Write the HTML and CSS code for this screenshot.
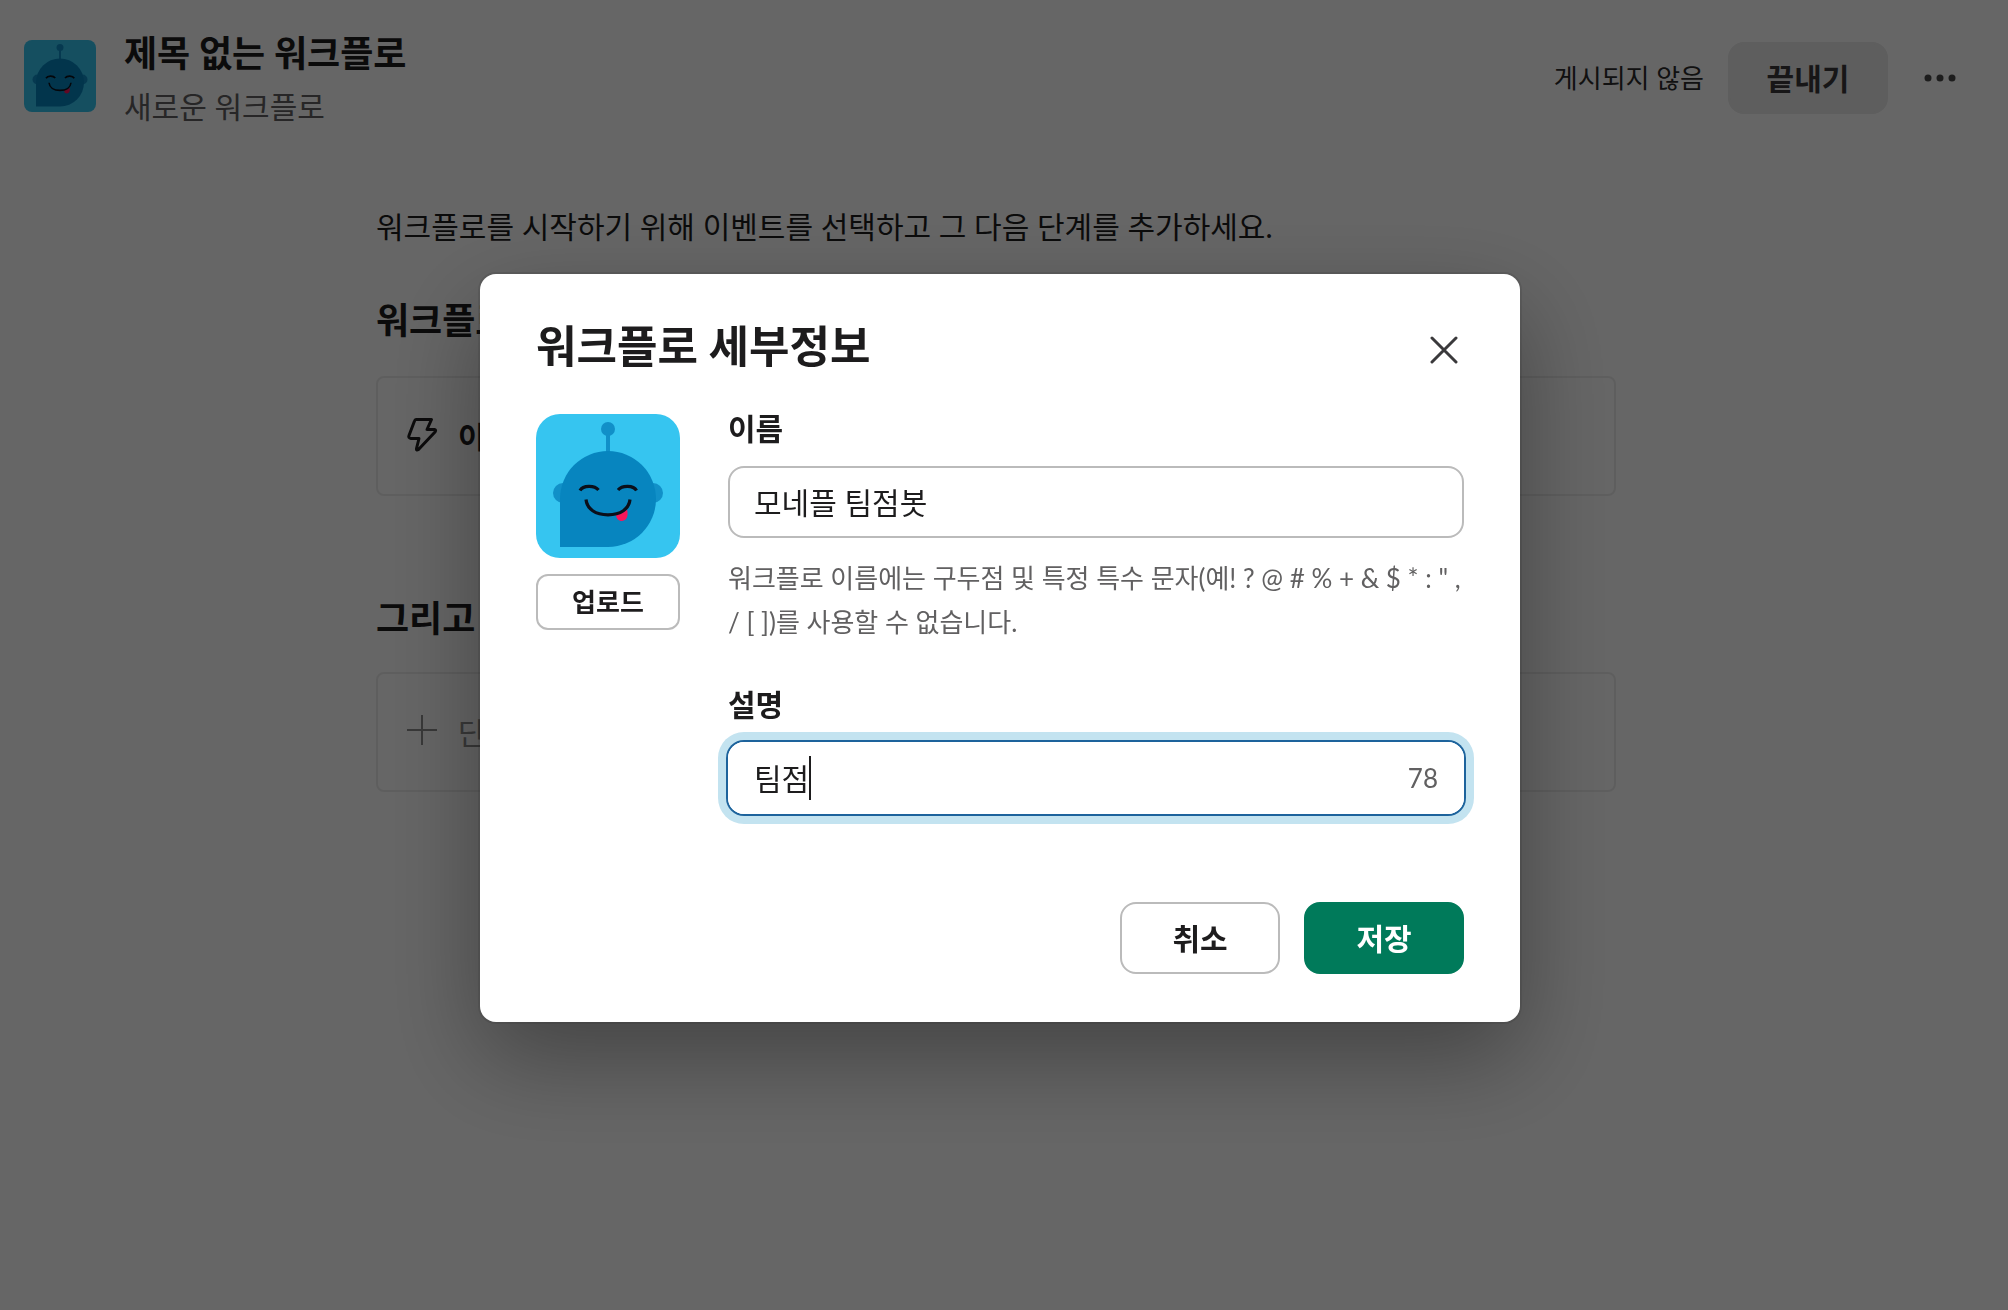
FILE: index.html
```html
<!DOCTYPE html>
<html lang="ko">
<head>
<meta charset="utf-8">
<meta name="viewport" content="width=device-width, initial-scale=1">
<title>워크플로 세부정보</title>
<link rel="stylesheet" href="styles.css">
</head>
<body>
<svg class="sprite" aria-hidden="true">
  <symbol id="bot" viewBox="0 0 144 144">
    <rect width="144" height="144" fill="#36c5f0"/>
    <g fill="#1190c8">
      <circle cx="72" cy="15" r="7"/>
      <rect x="70" y="18" width="4" height="22"/>
      <circle cx="27" cy="79" r="10"/>
      <circle cx="117" cy="79" r="10"/>
    </g>
    <path d="M24 85a48 48 0 1 1 48 48H24z" fill="#0785bf"/>
    <path d="M80 100.500c4-.5 8-2 11-5 1.500 5 .5 11-5 11.500-3.500 0-6-2.500-6-6.500z" fill="#f8155a"/>
    <g fill="none" stroke="#0b0f1a" stroke-width="3.200">
      <path d="M44 76.500c3-5.500 14.500-5.500 18.500-.5M82 76c4-5 15.500-5 18.500 .5"/>
      <path d="M50 85.500c1 9.500 9.500 15.300 22 15.300S93 95 94 85.500"/>
    </g>
  </symbol>
</svg>

<header class="topbar">
  <svg class="topbar-icon" aria-hidden="true"><use href="#bot"/></svg>
  <div class="topbar-names">
    <h1>제목 없는 워크플로</h1>
    <p>새로운 워크플로</p>
  </div>
  <div class="topbar-actions">
    <span class="status">게시되지 않음</span>
    <button type="button" class="btn btn-muted">끝내기</button>
    <button type="button" class="btn-icon btn-more" aria-label="더 보기">
      <svg width="32" height="8" viewBox="0 0 32 8" fill="#4a494a"><circle cx="4" cy="4" r="3.500"/><circle cx="16" cy="4" r="3.500"/><circle cx="28" cy="4" r="3.500"/></svg>
    </button>
  </div>
</header>

<main class="steps">
  <p class="intro">워크플로를 시작하기 위해 이벤트를 선택하고 그 다음 단계를 추가하세요.</p>
  <section class="step">
    <h2>워크플로</h2>
    <button type="button" class="card">
      <svg width="36" height="36" viewBox="0 0 36 36" fill="none" stroke="#1d1c1d" stroke-width="3" stroke-linejoin="round"><path d="M12 1.500H27.500L23 11.500H30.500Q32.500 12 31 14L14.500 31.500Q12 33 12.500 30.500L15 20.500H7Q4 20 5 17.500L10.500 3Q11 1.500 12 1.500z"/></svg>
      <span>이</span>
    </button>
  </section>
  <section class="step">
    <h2>그리고</h2>
    <button type="button" class="card card-next">
      <svg width="36" height="36" viewBox="0 0 36 36" fill="none" stroke="currentColor" stroke-width="2"><path d="M18 1V31M3 16H33"/></svg>
      <span>단</span>
    </button>
  </section>
</main>

<div class="overlay">
  <form class="modal" role="dialog" aria-modal="true" aria-labelledby="modal-title">
    <div class="modal-head">
      <h2 id="modal-title">워크플로 세부정보</h2>
      <button type="button" class="btn-icon" aria-label="닫기">
        <svg width="28" height="28" viewBox="0 0 28 28" fill="none" stroke="#3a393b" stroke-width="3" stroke-linecap="round"><path d="M2 2 26 26M26 2 2 26"/></svg>
      </button>
    </div>
    <div class="modal-body">
      <div class="picture">
        <svg class="picture-img" aria-hidden="true"><use href="#bot"/></svg>
        <button type="button" class="btn btn-small">업로드</button>
      </div>
      <div class="fields">
        <div class="field">
          <label for="name">이름</label>
          <div class="box"><input id="name" type="text" value="모네플 팀점봇" aria-describedby="name-help"></div>
          <p id="name-help" class="help">워크플로 이름에는 구두점 및 특정 특수 문자(예! ? @ # % + &amp; $ * : " , / [ ])를 사용할 수 없습니다.</p>
        </div>
        <div class="field">
          <label for="desc">설명</label>
          <div class="box box-focus">
            <input id="desc" class="fit" type="text" value="팀점">
            <span class="caret"></span>
            <output class="count" for="desc">78</output>
          </div>
        </div>
      </div>
    </div>
    <div class="modal-foot">
      <button type="button" class="btn">취소</button>
      <button type="submit" class="btn btn-primary">저장</button>
    </div>
  </form>
</div>
</body>
</html>
```

FILE: styles.css
```css
* { box-sizing: border-box; }

body {
  margin: 0;
  min-height: 100vh;
  background: #fff;
  color: #1d1c1d;
  font: 30px/44px Lato, "Noto Sans CJK KR", sans-serif;
}

h1, h2, p { margin: 0; }

button, input { font: inherit; color: inherit; }

svg { display: block; flex: none; }

.sprite { position: absolute; width: 0; height: 0; }

/* Top bar */
.topbar {
  display: flex;
  align-items: flex-start;
  gap: 28px;
  padding: 26px 40px 0 24px;
}

.topbar-icon {
  width: 72px;
  height: 72px;
  margin-top: 14px;
  border-radius: 8px;
}

.topbar-names { flex: 1; }

.topbar h1 { font-size: 36px; line-height: 54px; }

.topbar p { color: #616061; line-height: 52px; }

.topbar-actions {
  display: flex;
  align-items: center;
  gap: 24px;
  margin-top: 16px;
}

.status { color: #2c2b2c; font-size: 26px; }

/* Buttons */
.btn {
  min-width: 160px;
  height: 72px;
  padding: 0 24px;
  border: 2px solid #bbb;
  border-radius: 16px;
  background: #fff;
  font-weight: 700;
}

.btn-small {
  min-width: 0;
  height: 56px;
  border-radius: 12px;
  font-size: 26px;
  line-height: 36px;
}

.btn-muted { border-color: #eaeaea; background: #eaeaea; color: #3a393a; }

.btn-primary { border-color: #007a5a; background: #007a5a; color: #fff; }

.btn-icon {
  display: grid;
  place-items: center;
  width: 40px;
  height: 72px;
  padding: 0;
  border: 0;
  background: none;
}

.btn-more { width: 56px; }

/* Steps behind the dialog */
.steps {
  max-width: 1256px;
  margin: 0 auto;
  padding: 72px 16px 0 0;
}

.step { margin-top: 48px; }

.step + .step { margin-top: 98px; }

.step h2 {
  margin-bottom: 32px;
  font-size: 36px;
  line-height: 48px;
}

.step + .step h2 { margin-bottom: 30px; }

.card {
  display: flex;
  align-items: center;
  gap: 18px;
  width: 100%;
  height: 120px;
  padding: 0 26px;
  border: 2px solid #ececec;
  border-radius: 8px;
  background: #fff;
  font-weight: 700;
}

.card-next { color: #8d8d8d; font-weight: 400; }

/* Dialog */
.overlay {
  position: fixed;
  inset: 0;
  display: grid;
  place-items: center;
  padding: 0 8px 14px 0;
  overflow: auto;
  background: rgba(0, 0, 0, .6);
}

.modal {
  width: 100%;
  max-width: 1040px;
  padding: 40px 56px 48px;
  border-radius: 16px;
  background: #fff;
  box-shadow: 0 0 0 2px rgba(29, 28, 29, .13), 0 36px 96px rgba(0, 0, 0, .35);
}

.modal-head {
  display: flex;
  align-items: flex-start;
  justify-content: space-between;
  margin-bottom: 20px;
}

.modal-head h2 { font-size: 44px; line-height: 64px; }

.modal-body { display: flex; gap: 48px; }

.picture {
  display: flex;
  flex-direction: column;
  gap: 16px;
  width: 144px;
  padding-top: 8px;
}

.picture-img {
  width: 144px;
  height: 144px;
  border-radius: 24px;
}

.fields {
  display: flex;
  flex: 1;
  flex-direction: column;
  gap: 38px;
  min-width: 0;
}

.field label {
  display: block;
  margin-bottom: 16px;
  font-weight: 700;
}

.box {
  display: flex;
  align-items: center;
  height: 72px;
  padding: 0 24px;
  border: 2px solid #bbb;
  border-radius: 16px;
}

.box input {
  flex: 1;
  min-width: 0;
  height: 44px;
  padding: 0;
  border: 0;
  outline: 0;
  background: none;
}

.box .fit { flex: none; field-sizing: content; }

.box-focus {
  border-color: #fff;
  box-shadow: 0 0 0 2px #1d639c, 0 0 0 10px #c3e3f0;
}

.caret { width: 2px; height: 44px; background: #1d1c1d; }

.count { margin-left: auto; color: #616061; font-size: 26px; }

.help {
  margin-top: 18px;
  color: #616061;
  font-size: 26px;
  line-height: 44px;
}

.modal-foot {
  display: flex;
  justify-content: flex-end;
  gap: 24px;
  margin-top: 88px;
}
```
